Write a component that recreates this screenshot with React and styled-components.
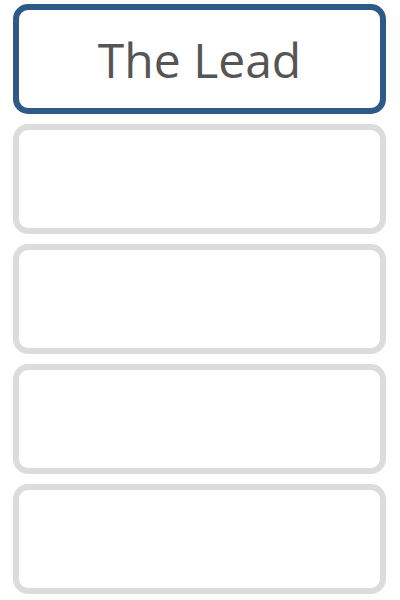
import React from "react";
import styled, { createGlobalStyle } from "styled-components";

const Global = createGlobalStyle`
  html, body { margin: 0; padding: 0; background: #fff; }
  body { font-family: "Open Sans", "Noto Sans", sans-serif; }
`;

const List = styled.div`
  display: flex;
  flex-direction: column;
  gap: 10px;
  padding: 4px 14px 0 13px;
`;

const Slot = styled.div`
  box-sizing: border-box;
  height: 110px;
  border: 6.5px solid ${(p) => (p.$active ? "#2d5a86" : "#dcdcdc")};
  border-radius: 15px;
  background: #fff;
  display: flex;
  align-items: center;
  justify-content: center;
  color: #555;
  font-size: 48px;
  font-weight: 400;
`;

const items = ["The Lead", "", "", "", ""];

export default function App() {
  return (
    <>
      <Global />
      <List>
        {items.map((t, i) => (
          <Slot key={i} $active={i === 0}>
            {t}
          </Slot>
        ))}
      </List>
    </>
  );
}
